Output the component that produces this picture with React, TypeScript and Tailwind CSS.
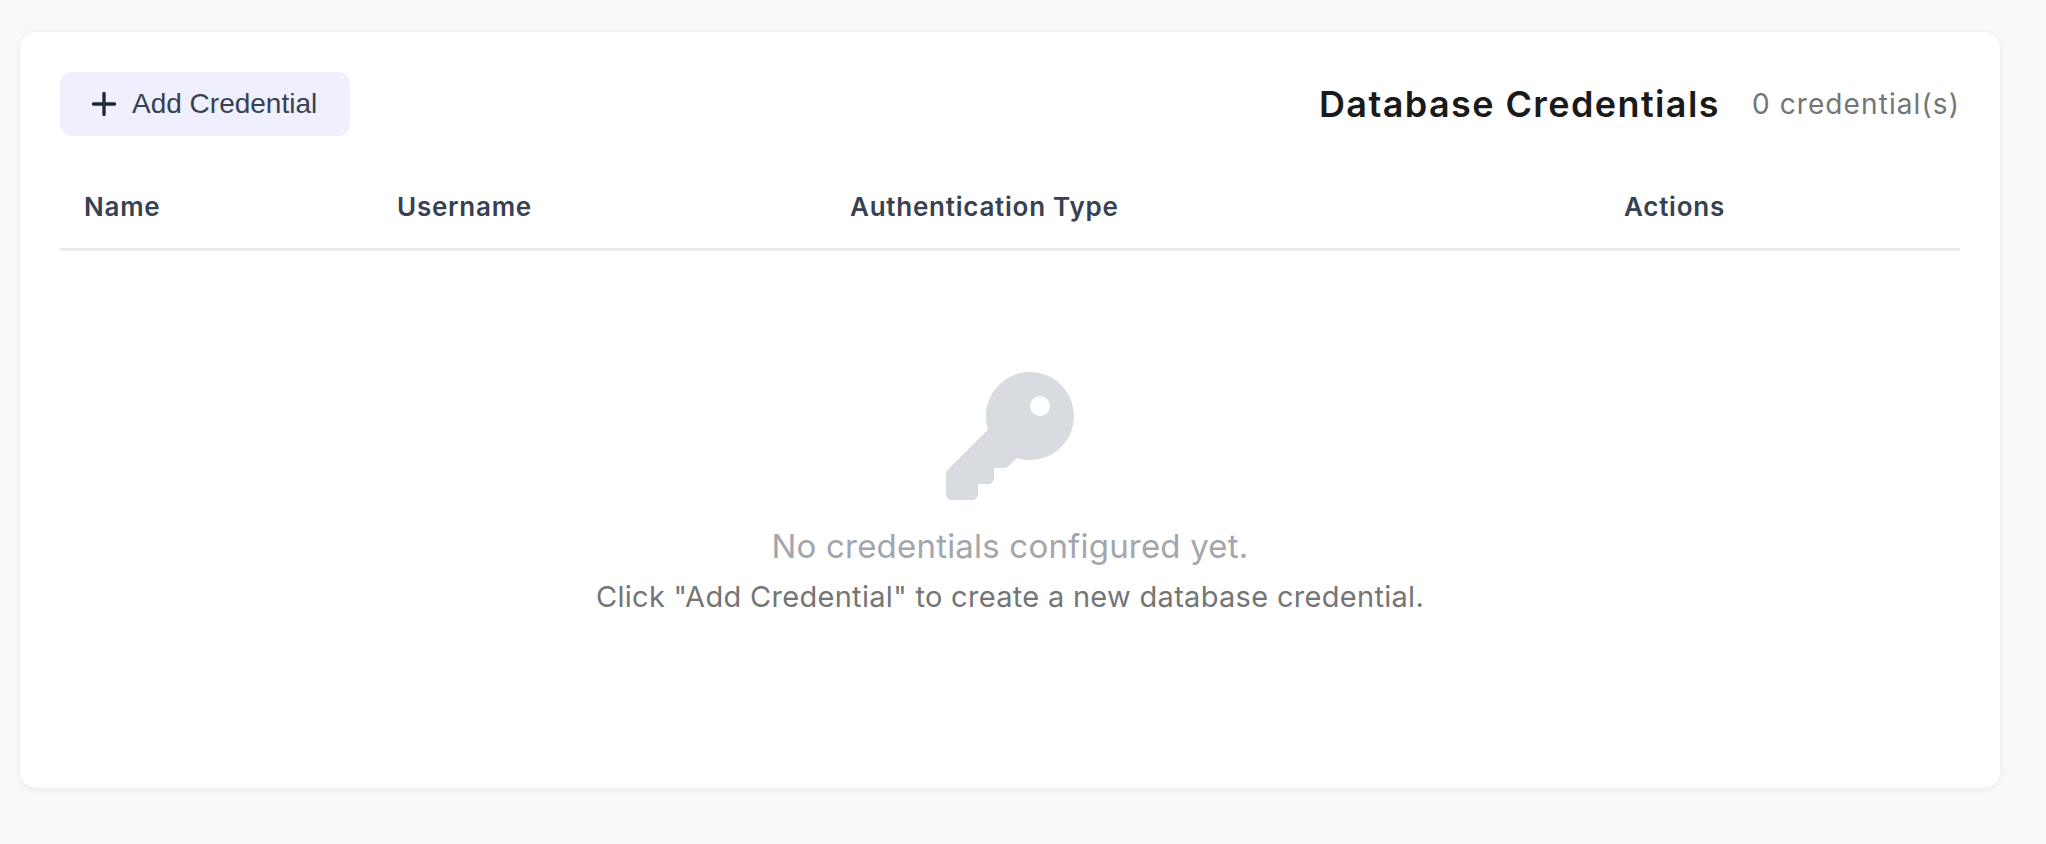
import { Plus } from 'lucide-react';
import { FaKey } from 'react-icons/fa6';

const COLUMNS = [
  { label: 'Name', width: 'w-[313px]' },
  { label: 'Username', width: 'w-[453px]' },
  { label: 'Authentication Type', width: 'w-[774px]' },
  { label: 'Actions', width: '' },
];

export default function App() {
  return (
    <div className="min-h-screen bg-[#f8faf8] px-[20px] pt-[32px] pb-[56px] [font-family:Inter,'Noto_Sans',sans-serif]">
      <div className="h-[756px] w-[1980px] rounded-[16px] bg-white p-[40px] shadow-[0_1px_6px_rgba(0,0,0,0.08)]">
        {/* Header */}
        <div className="flex h-[64px] items-center justify-between">
          <button
            type="button"
            className="flex h-[64px] w-[290px] items-center rounded-[12px] bg-[#f0effd] pl-[26px] text-[28px] text-[#374151] [font-family:'Liberation_Sans',Arial,sans-serif]"
          >
            <Plus size={36} strokeWidth={2.25} className="mr-[10px] shrink-0 text-[#1f2937]" />
            Add Credential
          </button>
          <div className="flex items-center gap-[32px]">
            <h2 className="text-[36px] font-semibold tracking-[1.4px] text-[#1a1a1a]">Database Credentials</h2>
            <span className="text-[28px] tracking-[1.1px] text-[#757575]">0 credential(s)</span>
          </div>
        </div>

        {/* Table */}
        <table className="mt-[36px] w-full border-collapse">
          <thead>
            <tr className="border-b-[3px] border-[#e9ecef]">
              {COLUMNS.map((col) => (
                <th
                  key={col.label}
                  className={`${col.width} h-[77px] pb-[6px] pl-[24px] text-left text-[26px] font-semibold tracking-[0.75px] text-[#374151]`}
                >
                  {col.label}
                </th>
              ))}
            </tr>
          </thead>
        </table>

        {/* Empty state */}
        <div className="mt-[121px] flex flex-col items-center">
          <FaKey size={128} className="text-[#d8dbdf]" />
          <p className="mt-[22px] text-[33px] tracking-[0.2px] text-[#a3a6ad]">No credentials configured yet.</p>
          <p className="mt-[4px] text-[29px] tracking-[0.3px] text-[#757575]">Click "Add Credential" to create a new database credential.</p>
        </div>
      </div>
    </div>
  );
}
